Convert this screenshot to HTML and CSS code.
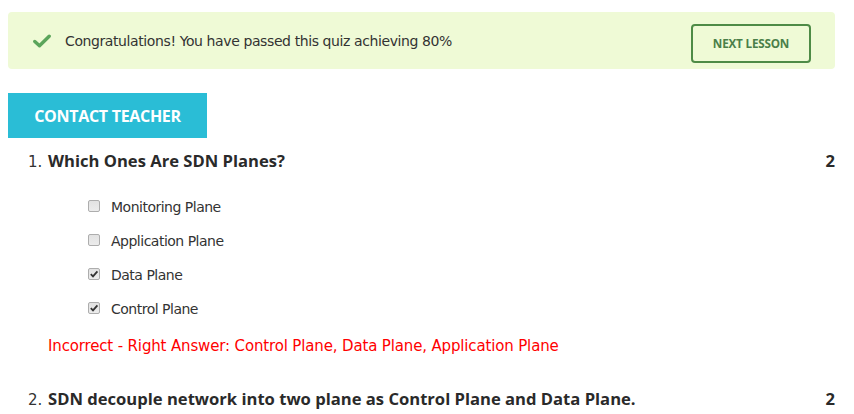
FILE: index.html
```html
<!DOCTYPE html>
<html lang="en">
<head>
    <meta charset="UTF-8">
    <title>Quiz Result</title>
    <link rel="stylesheet" href="styles.css">
</head>
<body>
    <div class="alert">
        <div class="alert-msg">
            <svg class="check" width="18" height="14" viewBox="0 0 18 14">
                <path d="M1.8 7.5 L6.5 11.8 L16.2 2.2" fill="none" stroke="#5ba55b" stroke-width="3.4" stroke-linecap="round" stroke-linejoin="round"/>
            </svg>
            <span>Congratulations! You have passed this quiz achieving 80%</span>
        </div>
        <button class="btn-next">NEXT LESSON</button>
    </div>

    <button class="btn-contact">CONTACT TEACHER</button>

    <ol class="questions">
        <li class="question">
            <div class="q-head">
                <span class="q-num">1.</span>
                <span class="q-title">Which Ones Are SDN Planes?</span>
                <span class="q-points">2</span>
            </div>
            <ul class="options">
                <li><span class="box"></span><span>Monitoring Plane</span></li>
                <li><span class="box"></span><span>Application Plane</span></li>
                <li><span class="box checked"><svg width="10" height="10" viewBox="0 0 10 10"><path d="M1.8 5.2 L4 7.4 L8.4 2.4" fill="none" stroke="#333" stroke-width="1.8"/></svg></span><span>Data Plane</span></li>
                <li><span class="box checked"><svg width="10" height="10" viewBox="0 0 10 10"><path d="M1.8 5.2 L4 7.4 L8.4 2.4" fill="none" stroke="#333" stroke-width="1.8"/></svg></span><span>Control Plane</span></li>
            </ul>
            <p class="feedback">Incorrect - Right Answer: Control Plane, Data Plane, Application Plane</p>
        </li>
        <li class="question">
            <div class="q-head">
                <span class="q-num">2.</span>
                <span class="q-title">SDN decouple network into two plane as Control Plane and Data Plane.</span>
                <span class="q-points">2</span>
            </div>
        </li>
    </ol>
</body>
</html>
```

FILE: styles.css
```css
/* Основные стили */
body {
    font-family: 'DejaVu Sans', 'Open Sans', sans-serif;
    margin: 0;
    padding: 12px 19px 0 8px;
    background: #fff;
    color: #333;
    font-size: 14px;
}

.alert {
    display: flex;
    align-items: center;
    justify-content: space-between;
    height: 57px;
    box-sizing: border-box;
    background: #effad6;
    border-radius: 4px;
    padding: 0 24px 0 25px;
}

.alert-msg {
    display: flex;
    align-items: center;
    gap: 14px;
    color: #333;
    font-size: 14px;
    letter-spacing: -0.4px;
}

.check {
    margin-top: 1px;
}

.btn-next {
    width: 120px;
    height: 39px;
    margin-top: 5px;
    background: transparent;
    border: 2px solid #4e8b46;
    border-radius: 4px;
    color: #4a7f49;
    font-family: 'Open Sans', sans-serif;
    font-weight: bold;
    font-size: 11.7px;
    letter-spacing: -0.2px;
    cursor: pointer;
}

.btn-contact {
    display: block;
    margin-top: 24px;
    width: 199px;
    height: 45px;
    border: none;
    background: #2abdd6;
    color: #fff;
    font-family: 'Open Sans', sans-serif;
    font-weight: bold;
    font-size: 16px;
    letter-spacing: -0.3px;
    cursor: pointer;
}

.questions {
    list-style: none;
    margin: 0;
    padding: 0;
}

.q-head {
    display: flex;
    align-items: baseline;
    padding-left: 20px;
    line-height: 20px;
}

.q-num {
    width: 20px;
    font-size: 15px;
}

.q-title {
    flex: 1;
    font-family: 'Open Sans', sans-serif;
    font-weight: bold;
    font-size: 16.6px;
    color: #2a2a2a;
}

.q-points {
    font-family: 'Open Sans', sans-serif;
    font-weight: bold;
    font-size: 16.6px;
    color: #2a2a2a;
}

.question:first-child .q-head {
    margin-top: 13px;
}

.options {
    list-style: none;
    margin: 18px 0 0;
    padding: 0 0 0 80px;
}

.options li {
    display: flex;
    align-items: center;
    height: 34px;
    font-size: 14px;
    letter-spacing: -0.5px;
}

.box {
    display: flex;
    align-items: center;
    justify-content: center;
    width: 12px;
    height: 12px;
    margin: 0 11px 3px 0;
    box-sizing: border-box;
    border: 1px solid #adadad;
    border-radius: 2px;
    background: linear-gradient(#e2e2e2, #ececec);
}

.feedback {
    margin: 10px 0 0 40px;
    color: #ff0000;
    font-size: 15px;
    letter-spacing: -0.15px;
    line-height: 20px;
}

.question + .question .q-head {
    margin-top: 33px;
}
```
